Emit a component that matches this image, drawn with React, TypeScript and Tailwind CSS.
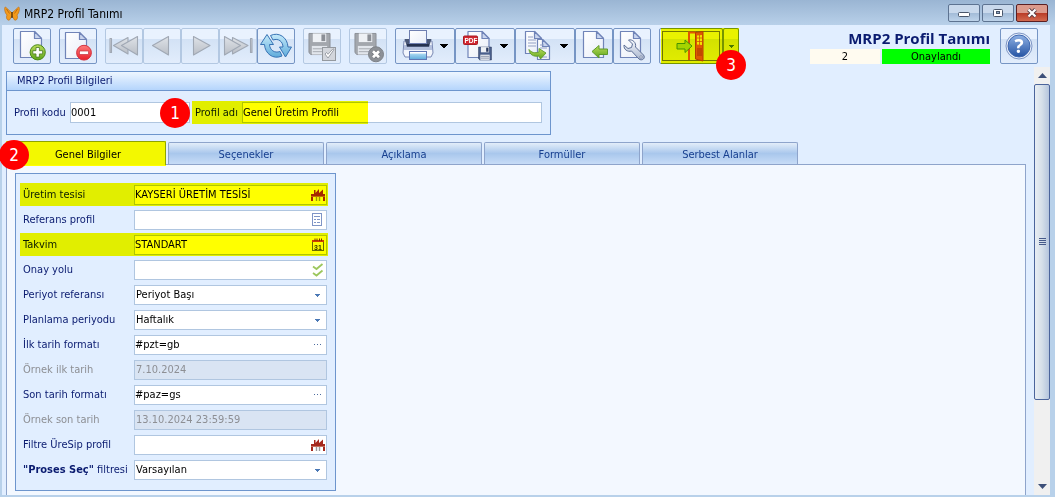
import { useState } from "react";
import type { ReactNode } from "react";
import { clsx } from "clsx";

const TABS = ["Genel Bilgiler", "Seçenekler", "Açıklama", "Formüller", "Serbest Alanlar"];

type FieldKind = "text" | "select" | "readonly";

interface Field {
    id: string;
    label: ReactNode;
    value: string;
    kind: FieldKind;
    icon?: ReactNode;
    marked?: boolean;
}

/* ---------- icons ---------- */

function Gradients() {
    return (
        <svg className="absolute h-0 w-0" aria-hidden="true">
            <defs>
                <linearGradient id="paper" x1="0" y1="0" x2="1" y2="1">
                    <stop offset="0" stopColor="#ffffff" />
                    <stop offset="1" stopColor="#e8edf8" />
                </linearGradient>
                <linearGradient id="green" x1="0" y1="0" x2="0" y2="1">
                    <stop offset="0" stopColor="#b9dc5a" />
                    <stop offset="1" stopColor="#5fa51c" />
                </linearGradient>
                <linearGradient id="red" x1="0" y1="0" x2="0" y2="1">
                    <stop offset="0" stopColor="#ff7b7b" />
                    <stop offset="1" stopColor="#e8202a" />
                </linearGradient>
                <linearGradient id="grey" x1="0" y1="0" x2="0" y2="1">
                    <stop offset="0" stopColor="#dfe3e8" />
                    <stop offset="1" stopColor="#b9bec6" />
                </linearGradient>
                <linearGradient id="blue" x1="0" y1="0" x2="0" y2="1">
                    <stop offset="0" stopColor="#c4eafa" />
                    <stop offset="1" stopColor="#5fabdb" />
                </linearGradient>
                <linearGradient id="navy" x1="0" y1="0" x2="0" y2="1">
                    <stop offset="0" stopColor="#8fb1e4" />
                    <stop offset="1" stopColor="#2453a3" />
                </linearGradient>
                <linearGradient id="steel" x1="0" y1="0" x2="0" y2="1">
                    <stop offset="0" stopColor="#f4f7fc" />
                    <stop offset="1" stopColor="#a9b6cf" />
                </linearGradient>
            </defs>
        </svg>
    );
}

function Icon({ w = 38, children }: { w?: number; children: ReactNode }) {
    return (
        <svg width={w} height={36} viewBox={`0 0 ${w} 36`} className="-m-px block shrink-0" aria-hidden="true">
            {children}
        </svg>
    );
}

function Page({ x, y, w = 21, h = 26 }: { x: number; y: number; w?: number; h?: number }) {
    return (
        <g transform={`translate(${x} ${y})`} stroke="#7084b8" strokeWidth="1.2" strokeLinejoin="round">
            <path d={`M0 0H${w - 7}L${w} 7V${h}H0Z`} fill="url(#paper)" />
            <path d={`M${w - 7} 0V7H${w}Z`} fill="#c9d5ee" />
        </g>
    );
}

function Caret() {
    return <path d="M45 16h8v1h-1v1h-1v1h-1v1h-2v-1h-1v-1h-1v-1h-1z" fill="#000" />;
}

function Floppy({ x, y, size, body, dark }: { x: number; y: number; size: number; body: string; dark: string }) {
    return (
        <g transform={`translate(${x} ${y}) scale(${size / 24})`}>
            <path d="M1 1H23V23H3L1 21Z" fill={body} stroke={dark} />
            <rect x="5" y="1" width="14" height="9" fill="#eef1f5" />
            <rect x="14" y="2" width="4" height="7" fill={dark} />
            <rect x="4" y="14" width="16" height="9" fill="#e2e6ec" />
            <path d="M5 17H19M5 20H19" stroke={dark} strokeWidth=".7" />
        </g>
    );
}

const NewIcon = () => (
    <Icon>
        <Page x={7.5} y={3.5} />
        <circle cx="24.7" cy="24.3" r="7.6" fill="url(#green)" stroke="#4b8a19" />
        <path d="M23 19.5h3.4v3.2h3.2v3.2h-3.2v3.2H23v-3.2h-3.2v-3.2H23Z" fill="#fff" stroke="#4b7a25" strokeWidth=".8" />
    </Icon>
);

const DeleteIcon = () => (
    <Icon>
        <Page x={6.5} y={4.5} />
        <circle cx="25" cy="24.7" r="7.4" fill="url(#red)" stroke="#d43340" />
        <rect x="20.5" y="23" width="9" height="3.4" fill="#fff" stroke="#c53843" strokeWidth=".7" />
    </Icon>
);

const navProps = { fill: "url(#grey)", stroke: "#a0a8b4", strokeWidth: 1.1, strokeLinejoin: "round" as const };

const FirstIcon = () => (
    <Icon>
        <g {...navProps}>
            <rect x="5" y="10.5" width="1.5" height="14" />
            <path d="M23 9.5V26L8.5 17.5Z" />
            <path d="M32.5 8.5V27L16.5 17.5Z" />
        </g>
    </Icon>
);

const PrevIcon = () => (
    <Icon>
        <path {...navProps} d="M25.5 8.5V27L9.5 17.5Z" />
    </Icon>
);

const NextIcon = () => (
    <Icon>
        <path {...navProps} d="M12.5 8.5V27L29 17.5Z" />
    </Icon>
);

const LastIcon = () => (
    <Icon>
        <g {...navProps}>
            <path d="M13.5 9.5V26L29 17.5Z" />
            <path d="M5.5 8.5V27L21.5 17.5Z" />
            <rect x="31.5" y="10.5" width="1.5" height="14" />
        </g>
    </Icon>
);

const RefreshIcon = () => (
    <Icon>
        <g fill="url(#blue)" stroke="#3873b4" strokeLinejoin="round">
            <path d="M10 6.5L16.5 16.5H12.5C12.8 22 17.5 25.5 23 23.5L25 28C16 32 8 25.5 7.5 16.5H3.5Z" />
            <path d="M28.5 29L34.5 19H31C30.5 9.5 22 3.5 13.5 7.5L16 12C21.5 10 25.8 13.5 26 19H22.5Z" />
        </g>
    </Icon>
);

const SaveOkIcon = () => (
    <Icon>
        <Floppy x={5} y={4.5} size={23} body="#a3a7ad" dark="#8b8f96" />
        <rect x="19.5" y="19.5" width="13" height="13" fill="#d3d6dc" stroke="#94999f" />
        <path d="M22 26l3 4 6-8.5-1-.7-5 5.5-1.5-1.8Z" fill="#fff" stroke="#878c94" strokeWidth=".8" />
    </Icon>
);

const SaveCloseIcon = () => (
    <Icon>
        <Floppy x={5} y={4.5} size={23} body="#a3a7ad" dark="#8b8f96" />
        <circle cx="27" cy="26.3" r="7.5" fill="#8d9197" stroke="#7e8288" />
        <path d="M24 23.3l6 6m0-6l-6 6" stroke="#70747a" strokeWidth="4.4" />
        <path d="M24 23.3l6 6m0-6l-6 6" stroke="#fff" strokeWidth="2.8" />
    </Icon>
);

const PrintIcon = () => (
    <Icon w={60}>
        <path d="M9 13h28l1 12-2 4H10l-2-4Z" fill="#f3f6fc" stroke="#7a89b4" />
        <path d="M9 17H37V22H9Z" fill="#b4c1de" />
        <path d="M9.5 11H36.5L34 19H12Z" fill="#4a5878" />
        <rect x="14.5" y="2.5" width="17" height="13" fill="url(#paper)" stroke="#6f7fb0" />
        <path d="M12 16H34V18H12Z" fill="#25314f" />
        <rect x="14.5" y="23.5" width="17" height="8" fill="url(#blue)" stroke="#5f77b4" />
        <path d="M15 24h16v1.5H15Z" fill="#fff" />
        <Caret />
    </Icon>
);

const PdfIcon = () => (
    <Icon w={60}>
        <Page x={13} y={3.5} />
        <rect x="8.5" y="8" width="14" height="8.5" rx="1" fill="#d22730" stroke="#a81a22" />
        <text x="9.5" y="15" fontSize="6.5" fontWeight="700" fontFamily="Liberation Sans, sans-serif" fill="#fff">PDF</text>
        <Floppy x={23} y={18.5} size={14} body="#4b608c" dark="#2c3b5f" />
        <Caret />
    </Icon>
);

const CopyIcon = () => (
    <Icon w={60}>
        <Page x={10.5} y={3.5} w={16} h={22} />
        <path d="M13 9h5M13 12h8M13 15h8M13 18h8" stroke="#93a0c4" />
        <Page x={22.5} y={11.5} w={12} h={20} />
        <path d="M25 17h4M25 20h7M25 29h7" stroke="#93a0c4" />
        <path d="M14 21.5c2 3 6 4 10 2.5V20.5l7 4.5-5.5 6-1.5-3c-5 1-9.5-1-10-6.5Z" fill="url(#green)" stroke="#5f9a2a" strokeWidth=".9" />
        <Caret />
    </Icon>
);

const ImportIcon = () => (
    <Icon>
        <Page x={8.5} y={3.5} w={20} />
        <path d="M17 23.5l7-6v3.5h8.5v5.5H24V30Z" fill="url(#green)" stroke="#5f9a2a" strokeLinejoin="round" />
    </Icon>
);

const WrenchIcon = () => (
    <Icon>
        <Page x={7.5} y={3.5} w={20} />
        <path
            d="M15.5 12c4-1 8 2.5 7 7l8 8c2.5 3-1.5 6.5-4.5 4l-7.5-8c-4 1.2-8-1.5-7.5-6l4 3.5 3.5-1 1-3.5Z"
            fill="url(#steel)"
            stroke="#5d6f96"
            strokeLinejoin="round"
        />
        <circle cx="28" cy="29" r="1.2" fill="#fff" stroke="#5d6f96" strokeWidth=".7" />
    </Icon>
);

const ExitIcon = () => (
    <Icon w={64}>
        <rect x="3.5" y="3.5" width="57" height="29" fill="none" stroke="#000" strokeDasharray="1 1" />
        <path d="M30 32V4.5H37" fill="none" stroke="#e2561c" strokeWidth="2" />
        <path d="M36.5 4.5l7.5-1V33L36.5 31Z" fill="#dd5a1c" stroke="#b63d10" />
        <path d="M38 7.5l5-.5v10l-5-.5Z" fill="#f3e3b0" />
        <path d="M40.5 7v10M38 10h5M38 13.5h5" stroke="#d0521a" strokeWidth=".8" />
        <path d="M38 20h5v8h-5Z" fill="#c24914" />
        <path d="M18 15.5h8V12l7 6-7 6.5V21h-8Z" fill="#a5d45d" stroke="#47932a" strokeLinejoin="round" />
    </Icon>
);

const HelpIcon = () => (
    <Icon>
        <circle cx="19" cy="18" r="13" fill="#e9f0fb" stroke="#7d95c4" />
        <circle cx="19" cy="18" r="11" fill="url(#navy)" stroke="#3f68b0" />
        <text x="19" y="25" textAnchor="middle" fontSize="19" fontWeight="700" fontFamily="Open Sans, sans-serif" fill="#fff">?</text>
    </Icon>
);

const ButterflyIcon = () => (
    <svg width="16" height="16" viewBox="0 0 16 16" aria-hidden="true">
        <path d="M8 7L1.500 1C0 1 .5 7 3 9 1.500 12 3.500 15 5.500 14L8 10l2.500 4c2 1 4-2 2.500-5C15.500 7 16 1 14.500 1Z" fill="#f39a1b" stroke="#b8680f" strokeWidth=".6" />
        <path d="M2.500 3l3 4.500M13.500 3l-3 4.500" fill="none" stroke="#b35f0c" strokeWidth=".8" />
        <path d="M8 6v6" stroke="#3d2208" strokeWidth="1.2" />
    </svg>
);

const FactoryIcon = () => (
    <svg width="14" height="14" viewBox="0 0 14 14" aria-hidden="true">
        <path d="M0 13V6h3V2h1.5v3L8 1v4l4-3.5V6h2v7h-2V9H2v4Z" fill="#a5281d" />
        <path d="M0 8.500h14" stroke="#c4705f" />
        <path d="M5.500 9v4M8.500 9v4" stroke="#9a9a9a" strokeWidth="1.4" />
    </svg>
);

const ListIcon = () => (
    <svg width="14" height="14" viewBox="0 0 14 14" aria-hidden="true">
        <rect x="1.5" y=".5" width="9" height="12" fill="#fff" stroke="#7f95c6" />
        <path d="M3 3.5h6M3 6.5h2M6 6.5h3M3 9.5h2M6 9.5h3" stroke="#7f95c6" />
    </svg>
);

const CalendarIcon = () => (
    <svg width="14" height="14" viewBox="0 0 14 14" aria-hidden="true">
        <rect x="1.5" y="3.5" width="11" height="9" fill="#fff" stroke="#6b6b6b" />
        <rect x="1" y="2" width="12" height="2" fill="#cf4022" />
        <path d="M4 .5v2.5M6 .5v2.5M8.5 .5v2.5M10.5 .5v2.5" stroke="#7a2d12" />
        <text x="7" y="11.5" textAnchor="middle" fontSize="7" fontWeight="700" fontFamily="Liberation Sans, sans-serif" fill="#333">31</text>
    </svg>
);

const ChecksIcon = () => (
    <svg width="14" height="14" viewBox="0 0 14 14" fill="none" stroke="#9cc75d" strokeWidth="1.8" aria-hidden="true">
        <path d="M2 3.5l3.5 2.5L11.5 1M2 10l3.5 2.5L11.5 7.5" />
    </svg>
);

const DotsIcon = () => (
    <svg width="14" height="14" viewBox="0 0 14 14" aria-hidden="true">
        <path d="M3 6h1v1H3zM6 6h1v1H6zM9 6h1v1H9z" fill="#4c6c9f" />
    </svg>
);

const ArrowIcon = () => (
    <svg width="14" height="14" viewBox="0 0 14 14" aria-hidden="true">
        <path d="M4 6h5v1H8v1H7v1H6V8H5V7H4z" fill="#4a78b5" />
    </svg>
);

/* ---------- building blocks ---------- */

function Badge({ n, className }: { n: number; className: string }) {
    return (
        <span
            className={clsx(
                "absolute z-20 flex h-[30px] w-[30px] items-center justify-center rounded-full bg-[#f00] text-[17px] leading-none text-white",
                className
            )}
        >
            {n}
        </span>
    );
}

function Highlight({ className }: { className: string }) {
    return <span className={clsx("pointer-events-none absolute z-10 bg-[#ff0] mix-blend-multiply", className)} />;
}

interface ToolButtonProps {
    title: string;
    disabled?: boolean;
    children: ReactNode;
}

function ToolButton({ title, disabled, children }: ToolButtonProps) {
    return (
        <button
            type="button"
            title={title}
            aria-label={title}
            disabled={disabled}
            className={clsx(
                "h-9 shrink-0 rounded-[2px] border bg-linear-to-b from-[#e9f2fe] from-30% via-[#d3e2f5] via-30% to-[#e2edfc]",
                disabled ? "border-[#b3c8e2]" : "border-[#7695c4]"
            )}
        >
            {children}
        </button>
    );
}

function FieldRow({ field }: { field: Field }) {
    const { id, label, value, kind, icon, marked } = field;
    const muted = kind === "readonly";
    const box = clsx(
        "h-5 w-full rounded-none border border-[#b0c6e0] pr-5 outline-none",
        muted ? "bg-[#d9e4f3] text-[#8d8f94]" : "bg-white text-black",
        kind === "text" ? "pl-0" : "pl-px",
        kind === "select" && "appearance-none"
    );

    return (
        <div className="relative flex h-[25px] items-center pr-2 pl-[7px]">
            <label htmlFor={id} className={clsx("w-[111px] shrink-0 whitespace-nowrap", muted ? "text-[#8d8f94]" : "text-[#0a1b70]")}>
                {label}
            </label>
            <div className="relative flex-1">
                {kind === "select" ? (
                    <select id={id} defaultValue={value} className={box}>
                        <option>{value}</option>
                    </select>
                ) : (
                    <input id={id} type="text" defaultValue={value} readOnly={muted} className={box} />
                )}
                <span className="pointer-events-none absolute top-[3px] right-0.5">{icon}</span>
            </div>
            {marked && <Highlight className="top-px right-[7px] bottom-px left-1" />}
        </div>
    );
}

const FIELDS: Field[] = [
    { id: "tesis", label: "Üretim tesisi", value: "KAYSERİ ÜRETİM TESİSİ", kind: "text", icon: <FactoryIcon />, marked: true },
    { id: "referans", label: "Referans profil", value: "", kind: "text", icon: <ListIcon /> },
    { id: "takvim", label: "Takvim", value: "STANDART", kind: "text", icon: <CalendarIcon />, marked: true },
    { id: "onay", label: "Onay yolu", value: "", kind: "text", icon: <ChecksIcon /> },
    { id: "periyot", label: "Periyot referansı", value: "Periyot Başı", kind: "select", icon: <ArrowIcon /> },
    { id: "planlama", label: "Planlama periyodu", value: "Haftalık", kind: "select", icon: <ArrowIcon /> },
    { id: "ilk", label: "İlk tarih formatı", value: "#pzt=gb", kind: "text", icon: <DotsIcon /> },
    { id: "ornekIlk", label: "Örnek ilk tarih", value: "7.10.2024", kind: "readonly" },
    { id: "son", label: "Son tarih formatı", value: "#paz=gs", kind: "text", icon: <DotsIcon /> },
    { id: "ornekSon", label: "Örnek son tarih", value: "13.10.2024 23:59:59", kind: "readonly" },
    { id: "filtre", label: "Filtre ÜreSip profil", value: "", kind: "text", icon: <FactoryIcon /> },
    { id: "proses", label: <><b>"Proses Seç"</b> filtresi</>, value: "Varsayılan", kind: "select", icon: <ArrowIcon /> },
];

/* ---------- window parts ---------- */

function TitleBar() {
    const button = "flex h-[18px] w-8 items-center justify-center rounded-[2px] border border-[#5d7391] bg-linear-to-b from-[#c9d9ec] from-50% via-[#a2bbd7] via-50% to-[#bdd3ea]";
    return (
        <header className="flex h-[25px] items-center justify-between bg-linear-to-b from-[#9ab5d3] to-[#b8d0e9] pr-[7px] pl-1">
            <div className="flex items-center gap-1 pt-0.5 text-[12px] text-black">
                <ButterflyIcon />
                <span>MRP2 Profil Tanımı</span>
            </div>
            <div className="flex gap-0.5">
                <button type="button" aria-label="Simge durumuna küçült" className={button}>
                    <svg width="12" height="8" viewBox="0 0 12 8"><rect x=".5" y="3.5" width="11" height="4" rx="1" fill="#fff" stroke="#49566b" /></svg>
                </button>
                <button type="button" aria-label="Ekranı kapla" className={button}>
                    <svg width="10" height="8" viewBox="0 0 10 8"><rect x=".5" y=".5" width="9" height="7" rx="1" fill="#fff" stroke="#49566b" /><rect x="3.5" y="2.5" width="3" height="2" fill="#8ba5c4" stroke="#49566b" /></svg>
                </button>
                <button
                    type="button"
                    aria-label="Kapat"
                    className="flex h-[18px] w-8 items-center justify-center rounded-[2px] border border-[#5b1f22] bg-linear-to-b from-[#dc9a8c] from-50% via-[#b93a25] via-50% to-[#d2694f]"
                >
                    <svg width="12" height="10" viewBox="0 0 12 10"><path d="M2.5 1.5l7 7m0-7l-7 7" stroke="#5a4048" strokeWidth="4" /><path d="M2.5 1.5l7 7m0-7l-7 7" stroke="#fff" strokeWidth="2.2" /></svg>
                </button>
            </div>
        </header>
    );
}

function ToolBar() {
    return (
        <div className="flex h-[42px] items-start justify-between pt-[3px] pr-3 pl-[11px]">
            <div className="flex gap-2">
                <ToolButton title="Yeni"><NewIcon /></ToolButton>
                <ToolButton title="Sil"><DeleteIcon /></ToolButton>
                <div className="flex">
                    <ToolButton title="İlk" disabled><FirstIcon /></ToolButton>
                    <ToolButton title="Önceki" disabled><PrevIcon /></ToolButton>
                    <ToolButton title="Sonraki" disabled><NextIcon /></ToolButton>
                    <ToolButton title="Son" disabled><LastIcon /></ToolButton>
                    <ToolButton title="Yenile"><RefreshIcon /></ToolButton>
                </div>
                <ToolButton title="Kaydet" disabled><SaveOkIcon /></ToolButton>
                <ToolButton title="Kaydet ve kapat" disabled><SaveCloseIcon /></ToolButton>
                <div className="flex">
                    <ToolButton title="Yazdır"><PrintIcon /></ToolButton>
                    <ToolButton title="PDF kaydet"><PdfIcon /></ToolButton>
                    <ToolButton title="Kopyala"><CopyIcon /></ToolButton>
                    <ToolButton title="Aktar"><ImportIcon /></ToolButton>
                    <ToolButton title="Ayarlar"><WrenchIcon /></ToolButton>
                </div>
                <div className="relative flex">
                    <ToolButton title="Çıkış"><ExitIcon /></ToolButton>
                    <ToolButton title="Çıkış seçenekleri">
                        <svg width="14" height="34" viewBox="0 0 14 34" aria-hidden="true"><path d="M5 16h5v1H9v1H8v1H7v-1H6v-1H5z" fill="#4a78b5" /></svg>
                    </ToolButton>
                    <Highlight className="top-0 right-0 bottom-0 left-0.5" />
                    <Badge n={3} className="top-[22px] -right-[7px]" />
                </div>
            </div>
            <div className="flex gap-2.5">
                <div className="flex w-[180px] flex-col">
                    <h1 className="text-right font-['Open_Sans',sans-serif] text-[15px] leading-[21px] font-bold whitespace-nowrap text-[#0a1b70]">MRP2 Profil Tanımı</h1>
                    <div className="flex gap-0.5 text-center leading-[15px] text-black">
                        <span className="w-[70px] bg-[#fffbf0]">2</span>
                        <span className="flex-1 bg-[#0f0]">Onaylandı</span>
                    </div>
                </div>
                <ToolButton title="Yardım"><HelpIcon /></ToolButton>
            </div>
        </div>
    );
}

function ProfileInfo() {
    return (
        <section className="w-[545px] border border-[#6d95cd]">
            <h2 className="h-[19px] border-b border-[#6d95cd] bg-linear-to-b from-[#eef6ff] to-[#b5d5fc] pl-2.5 leading-[18px] text-[#0a1b70]">MRP2 Profil Bilgileri</h2>
            <div className="relative flex h-[43px] items-center pr-2 pl-[7px] text-[#0a1b70]">
                <label htmlFor="kod" className="w-14 shrink-0 whitespace-nowrap">Profil kodu</label>
                <input id="kod" type="text" defaultValue="0001" className="h-[21px] w-[120px] rounded-none border border-[#b0c6e0] bg-white pl-0 text-black outline-none" />
                <label htmlFor="ad" className="w-[52px] shrink-0 pl-[5px] whitespace-nowrap">Profil adı</label>
                <input id="ad" type="text" defaultValue="Genel Üretim Profili" className="h-[21px] min-w-0 flex-1 rounded-none border border-[#b0c6e0] bg-white pl-0 text-black outline-none" />
                <Highlight className="top-2.5 bottom-2.5 left-[185px] w-[176px]" />
                <Badge n={1} className="top-[7px] left-[153px]" />
            </div>
        </section>
    );
}

function ScrollBar() {
    return (
        <div className="flex w-4 shrink-0 flex-col bg-[#f0f0f0]">
            <button type="button" aria-label="Yukarı kaydır" className="flex h-[17px] items-center justify-center">
                <svg width="9" height="5" viewBox="0 0 9 5"><path d="M0 5h9L4.5 0z" fill="#3d4f78" /></svg>
            </button>
            <div className="flex flex-4 items-center justify-center rounded-[2px] border border-[#4b649b] bg-linear-to-r from-[#e8edf3] via-[#d5dfe9] to-[#b5c5dd]">
                <svg width="7" height="8" viewBox="0 0 7 8"><path d="M0 .5h7M0 2.5h7M0 4.5h7M0 6.5h7" stroke="#465a8a" /></svg>
            </div>
            <div className="flex-1" />
            <button type="button" aria-label="Aşağı kaydır" className="flex h-[17px] items-center justify-center">
                <svg width="9" height="5" viewBox="0 0 9 5"><path d="M0 0h9L4.5 5z" fill="#3d4f78" /></svg>
            </button>
        </div>
    );
}

export default function App() {
    const [tab, setTab] = useState(0);

    return (
        <div className="flex min-h-screen flex-col bg-[#b8d1ea] font-['DejaVu_Sans_Condensed','Noto_Sans',sans-serif] text-[11px] leading-[14px]">
            <Gradients />
            <TitleBar />
            <div className="mr-[5px] mb-0.5 ml-0.5 flex flex-1 flex-col bg-[#e1eeff]">
                <ToolBar />
                <div className="flex flex-1">
                    <main className="flex min-w-0 flex-1 flex-col pt-1 pr-2 pl-1">
                        <ProfileInfo />
                        <div role="tablist" className="relative mt-1.5 flex h-[23px] items-end gap-0.5">
                            {TABS.map((name, i) => (
                                <button
                                    key={name}
                                    type="button"
                                    role="tab"
                                    aria-selected={tab === i}
                                    onClick={() => setTab(i)}
                                    className={clsx(
                                        "relative rounded-t-[2px] border border-b-0 border-[#8ea4cb] pt-0.5",
                                        tab === i
                                            ? "z-10 -mb-px h-6 w-40 bg-[#f3f8ff] pl-1 text-black"
                                            : "h-[22px] w-[156px] bg-linear-to-b from-[#e3edf9] from-0% via-[#a9c7ec] via-50% to-[#c7dcf7] text-[#173f8f]"
                                    )}
                                >
                                    {name}
                                    {i === 0 && <Highlight className="-inset-px" />}
                                </button>
                            ))}
                            <Badge n={2} className="-top-px -left-[7px]" />
                        </div>
                        <div role="tabpanel" className="flex-1 border border-b-0 border-[#8ea4cb] bg-[#f3f8ff] px-2 pt-2 pb-[3px]">
                            <section className="w-[321px] border border-[#6d95cd] bg-[#e1eeff] pt-2 pb-2">
                                {FIELDS.map((f) => (
                                    <FieldRow key={f.id} field={f} />
                                ))}
                            </section>
                        </div>
                    </main>
                    <ScrollBar />
                </div>
            </div>
        </div>
    );
}
